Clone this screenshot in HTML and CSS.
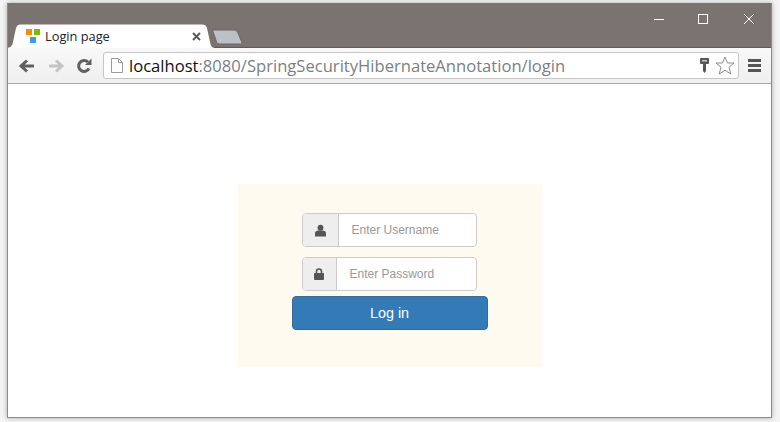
FILE: index.html
```html
<!doctype html>
<html>
    <head>
        <meta charset="utf-8">
        <title>Login page</title>
        <link rel="stylesheet" href="styles.css">
    </head>

    <body>
    <div class="window">
        <div class="titlebar">
            <div class="tab">
                <svg class="tab-shape" width="206" height="24" viewBox="0 0 206 24">
                    <path d="M0 23.500C3 23.500 4 22 5 18L8 4C9 1.500 10 .5 13 .5H194C197 .5 198 1.500 199 4L202 18C203 22 203.500 23.500 206 23.500V24H0Z" fill="#fff"/>
                </svg>
                <svg class="favicon" width="14" height="15" viewBox="0 0 14 15">
                    <rect x="0" y="0" width="6" height="6" fill="#f78c00"/>
                    <rect x="8" y="0" width="6" height="6" fill="#7cbb00"/>
                    <rect x="4" y="8" width="6" height="6" fill="#3f97f2"/>
                </svg>
                <span class="tab-title">Login page</span>
                <svg class="tab-close" width="9" height="9" viewBox="0 0 9 9">
                    <path d="M1 1L8 8M8 1L1 8" stroke="#5a5a5a" stroke-width="2"/>
                </svg>
            </div>
            <svg class="new-tab" width="32" height="16" viewBox="0 0 32 16">
                <path d="M1.500 1H22C24 1 25 2 26 4L30.500 15H7C5.500 15 5 14 4.500 13L1 2.500C.8 1.500 1 1 1.500 1Z" fill="#bcc0c7" stroke="#6a6765"/>
            </svg>
            <div class="window-buttons">
                <svg width="12" height="12" viewBox="0 0 12 12"><path d="M1 6.500H11" stroke="#fff"/></svg>
                <svg width="12" height="12" viewBox="0 0 12 12"><rect x="1.500" y="1.500" width="9" height="9" fill="none" stroke="#fff"/></svg>
                <svg width="12" height="12" viewBox="0 0 12 12"><path d="M1 1L11 11M11 1L1 11" stroke="#fff"/></svg>
            </div>
        </div>

        <div class="toolbar">
            <svg class="nav-icon" width="18" height="16" viewBox="0 0 18 16">
                <path d="M16 8H4M9 2.500L3 8L9 13.500" fill="none" stroke="#5f6060" stroke-width="3"/>
            </svg>
            <svg class="nav-icon" width="18" height="16" viewBox="0 0 18 16">
                <path d="M2 8H14M9 2.500L15 8L9 13.500" fill="none" stroke="#c4c4c4" stroke-width="3"/>
            </svg>
            <svg class="nav-icon" width="16" height="16" viewBox="0 0 16 16">
                <path d="M13 10.500A5.500 5.500 0 1 1 12 4" fill="none" stroke="#5f6060" stroke-width="3"/>
                <path d="M9 7H15.500V.5Z" fill="#5f6060"/>
            </svg>
            <div class="omnibox">
                <svg class="page-icon" width="12" height="15" viewBox="0 0 12 15">
                    <path d="M.5 .5H7.500L11.500 4.500V14.500H.5Z M7.500 .5V4.500H11.500" fill="#fdfdfd" stroke="#9a9a9a"/>
                </svg>
                <span class="url"><span class="host">localhost</span>:8080/SpringSecurityHibernateAnnotation/login</span>
                <svg class="key-icon" width="9" height="15" viewBox="0 0 9 15">
                    <path d="M1 0H8Q9 0 9 1V5Q9 6 8 6H6V13L4.500 15L3 13V6H1Q0 6 0 5V1Q0 0 1 0Z" fill="#55585a"/>
                    <rect x="2" y="2" width="5" height="1.500" fill="#c9cbcc"/>
                </svg>
                <svg class="star-icon" width="20" height="19" viewBox="0 0 20 19">
                    <path d="M10 1L12.500 7H19L14 11.200L15.800 18L10 14.200L4.200 18L6 11.200L1 7H7.500Z" fill="#fff" stroke="#8b8b8b"/>
                </svg>
            </div>
            <div class="menu-icon"><i></i><i></i><i></i></div>
        </div>

        <div class="content">
            <form class="login-box">
                <div class="input-group user-group">
                    <span class="addon">
                        <svg width="11" height="13" viewBox="0 0 12 13">
                            <circle cx="6" cy="3.500" r="3.200" fill="#555"/>
                            <path d="M0 13V9.500C0 7.500 2 6.500 3.500 6.500H8.500C10 6.500 12 7.500 12 9.500V13Z" fill="#555"/>
                        </svg>
                    </span>
                    <input class="field" type="text" placeholder="Enter Username">
                </div>
                <div class="input-group pass-group">
                    <span class="addon">
                        <svg width="10" height="12" viewBox="0 0 10 12">
                            <path d="M2.500 5V3.500A2.500 2.500 0 0 1 7.500 3.500V5" fill="none" stroke="#555" stroke-width="1.600"/>
                            <rect x="0" y="5" width="10" height="7" rx="1" fill="#555"/>
                        </svg>
                    </span>
                    <input class="field" type="password" placeholder="Enter Password">
                </div>
                <button class="login-button" type="button">Log in</button>
            </form>
        </div>
    </div>
    </body>
</html>
```

FILE: styles.css
```css
body {
    margin: 0;
    width: 780px;
    height: 422px;
    overflow: hidden;
    background: #f4f4f4;
    font-family: "Liberation Sans", Arial, sans-serif;
}

.window {
    display: flex;
    flex-direction: column;
    width: 765px;
    height: 415px;
    margin: 3px 0 0 7px;
    box-sizing: border-box;
    border: 1px solid #8d8a88;
    border-top-color: #7a7370;
    box-shadow: 0 0 5px rgba(0, 0, 0, 0.3);
}

.titlebar {
    display: flex;
    align-items: flex-end;
    flex: none;
    height: 43px;
    background: #7a7370;
    border-bottom: 1px solid #5f5b59;
    box-sizing: content-box;
    position: relative;
}

.tab {
    display: flex;
    align-items: center;
    position: relative;
    width: 206px;
    height: 24px;
    margin-bottom: -1px;
    padding-left: 18px;
    box-sizing: border-box;
}

.tab-shape {
    position: absolute;
    left: 0;
    top: 0;
}

.favicon {
    position: relative;
    flex: none;
    margin-top: 1px;
}

.tab-title {
    position: relative;
    margin-left: 5px;
    font-family: "Open Sans", sans-serif;
    font-size: 12.800px;
    color: #222;
}

.tab-close {
    position: relative;
    margin-left: auto;
    margin-right: 13px;
}

.new-tab {
    flex: none;
    margin: 0 0 2px -2px;
}

.window-buttons {
    display: flex;
    gap: 34px;
    position: absolute;
    top: 9px;
    right: 16px;
}

.window-buttons svg:first-child {
    margin-right: -2px;
}

.toolbar {
    display: flex;
    align-items: center;
    flex: none;
    height: 36px;
    padding: 0 10px 0 10px;
    box-sizing: border-box;
    background: linear-gradient(#f8f8f8, #efefef);
    border-bottom: 1px solid #a8a8a8;
}

.nav-icon {
    flex: none;
    margin-right: 11px;
}

.omnibox {
    display: flex;
    align-items: center;
    flex: none;
    width: 636px;
    height: 27px;
    padding: 0 3px 0 7px;
    box-sizing: border-box;
    background: #fff;
    border: 1px solid #c6c6c6;
    border-radius: 3px;
}

.url {
    margin-left: 6px;
    font-family: "Open Sans", sans-serif;
    font-size: 16.600px;
    color: #7b7f85;
    white-space: nowrap;
}

.host {
    color: #111;
}

.key-icon {
    margin-left: auto;
    flex: none;
}

.star-icon {
    flex: none;
    margin-left: 6px;
}

.menu-icon {
    display: flex;
    flex-direction: column;
    gap: 2px;
    margin-left: 9px;
}

.menu-icon i {
    display: block;
    width: 13px;
    height: 3px;
    background: #555;
}

.content {
    flex: 1;
    display: flex;
    justify-content: center;
    padding: 100px 0 0 0;
    background: #fff;
}

.login-box {
    display: flex;
    flex-direction: column;
    align-items: center;
    width: 304px;
    height: 183px;
    padding-top: 29px;
    box-sizing: border-box;
    background: #fffaf0;
}

.input-group {
    display: flex;
    width: 175px;
    height: 34px;
    margin-left: -1px;
    box-sizing: border-box;
    background: #fff;
    border: 1px solid #ccc;
    border-radius: 4px;
    overflow: hidden;
}

.user-group {
    margin-bottom: 10px;
}

.pass-group {
    margin-bottom: 5px;
}

.addon {
    display: flex;
    align-items: center;
    justify-content: center;
    flex: none;
    background: #eee;
    border-right: 1px solid #ccc;
}

.user-group .addon {
    width: 35px;
}

.pass-group .addon {
    width: 33px;
}

.field {
    flex: 1;
    min-width: 0;
    padding: 0 13px;
    border: none;
    outline: none;
    background: transparent;
    font-family: "Liberation Sans", Arial, sans-serif;
    font-size: 12px;
    color: #555;
}

.field::placeholder {
    color: #999;
    opacity: 1;
}

.login-button {
    width: 196px;
    height: 34px;
    padding: 0;
    background: #337ab7;
    border: 1px solid #2e6da4;
    border-radius: 4px;
    color: #fff;
    font-family: "Liberation Sans", Arial, sans-serif;
    font-size: 14.400px;
}
```
